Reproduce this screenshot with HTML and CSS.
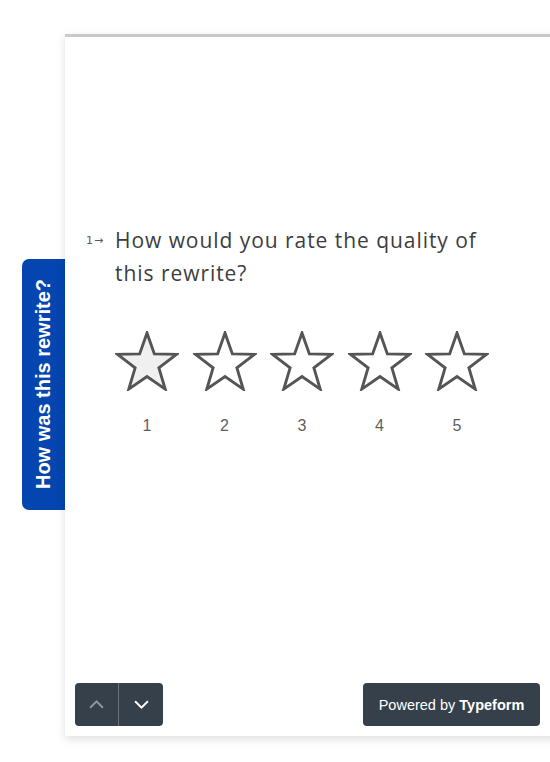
FILE: index.html
```html
<!DOCTYPE html>
<html>
<head>
<meta charset="utf-8">
<link rel="stylesheet" href="styles.css">
</head>
<body>
<div class="page">
  <div class="tab"><span class="tab-text">How was this rewrite?</span></div>
  <div class="panel">
    <div class="content">
      <div class="question">
        <span class="qnum">1<span class="arrow">→</span></span>
        <span class="qtext">How would you rate the quality of this rewrite?</span>
      </div>
      <div class="stars">
        <div class="rate">
          <svg class="star" viewBox="0 0 64 60" width="64" height="60"><polygon class="filled" points="32,2 39.35,22.89 61.48,23.42 43.89,36.86 50.22,58.08 32,45.5 13.78,58.08 20.11,36.86 2.52,23.42 24.65,22.89"/></svg>
          <span class="num">1</span>
        </div>
        <div class="rate">
          <svg class="star" viewBox="0 0 64 60" width="64" height="60"><polygon points="32,2 39.35,22.89 61.48,23.42 43.89,36.86 50.22,58.08 32,45.5 13.78,58.08 20.11,36.86 2.52,23.42 24.65,22.89"/></svg>
          <span class="num">2</span>
        </div>
        <div class="rate">
          <svg class="star" viewBox="0 0 64 60" width="64" height="60"><polygon points="32,2 39.35,22.89 61.48,23.42 43.89,36.86 50.22,58.08 32,45.5 13.78,58.08 20.11,36.86 2.52,23.42 24.65,22.89"/></svg>
          <span class="num">3</span>
        </div>
        <div class="rate">
          <svg class="star" viewBox="0 0 64 60" width="64" height="60"><polygon points="32,2 39.35,22.89 61.48,23.42 43.89,36.86 50.22,58.08 32,45.5 13.78,58.08 20.11,36.86 2.52,23.42 24.65,22.89"/></svg>
          <span class="num">4</span>
        </div>
        <div class="rate">
          <svg class="star" viewBox="0 0 64 60" width="64" height="60"><polygon points="32,2 39.35,22.89 61.48,23.42 43.89,36.86 50.22,58.08 32,45.5 13.78,58.08 20.11,36.86 2.52,23.42 24.65,22.89"/></svg>
          <span class="num">5</span>
        </div>
      </div>
    </div>
    <div class="footer">
      <div class="nav">
        <button class="navbtn up" type="button">
          <svg viewBox="0 0 16 16" width="17" height="17"><path d="M2 11 L8 5 L14 11" fill="none" stroke="currentColor" stroke-width="1.9"/></svg>
        </button>
        <button class="navbtn down" type="button">
          <svg viewBox="0 0 16 16" width="17" height="17"><path d="M2 5 L8 11 L14 5" fill="none" stroke="currentColor" stroke-width="1.9"/></svg>
        </button>
      </div>
      <div class="powered">Powered by <b>Typeform</b></div>
    </div>
  </div>
</div>
</body>
</html>
```

FILE: styles.css
```css
html, body {
  margin: 0;
  padding: 0;
  background: #ffffff;
  overflow: hidden;
}
.page {
  display: flex;
  align-items: flex-start;
  padding: 34px 0 26px 22px;
  width: 528px;
  overflow: hidden;
}
.tab {
  width: 43px;
  height: 251px;
  margin-top: 225px;
  background: #0445af;
  border-radius: 7px 0 0 7px;
  display: flex;
  align-items: center;
  justify-content: center;
  flex-shrink: 0;
}
.tab-text {
  writing-mode: vertical-rl;
  transform: rotate(180deg);
  color: #ffffff;
  font-family: "Liberation Sans", Arial, sans-serif;
  font-weight: bold;
  font-size: 20px;
  white-space: nowrap;
}
.panel {
  width: 495px;
  height: 699px;
  border-top: 3px solid #c9c9c9;
  background: #ffffff;
  box-shadow: 0 3px 9px rgba(0, 0, 0, 0.13);
  display: flex;
  flex-direction: column;
  flex-shrink: 0;
}
.content {
  padding: 187px 0 0 21px;
}
.question {
  display: flex;
  align-items: flex-start;
  font-family: "Open Sans", sans-serif;
  color: #3d3d3d;
}
.qnum {
  font-family: "DejaVu Sans", sans-serif;
  font-size: 11px;
  width: 29px;
  line-height: 33px;
  color: #5a5a5a;
}
.arrow {
  margin-left: 1px;
}
.qtext {
  font-size: 21px;
  line-height: 33px;
  width: 372px;
  letter-spacing: 0.95px;
}
.stars {
  display: flex;
  gap: 13.5px;
  margin: 41px 0 0 29px;
}
.rate {
  width: 64px;
  display: flex;
  flex-direction: column;
  align-items: center;
}
.star {
  display: block;
}
.star polygon {
  fill: #ffffff;
  stroke: #555555;
  stroke-width: 2.9;
  stroke-linejoin: miter;
}
.star polygon.filled {
  fill: #f0f0f0;
}
.num {
  margin-top: 25px;
  font-family: "Liberation Sans", Arial, sans-serif;
  font-size: 16px;
  line-height: 20px;
  color: #5e5e5e;
}
.footer {
  margin-top: auto;
  display: flex;
  justify-content: space-between;
  align-items: center;
  padding: 0 20px 10px 10px;
}
.nav {
  display: flex;
  border-radius: 4px;
  overflow: hidden;
}
.navbtn {
  width: 44px;
  height: 43px;
  border: none;
  padding: 0;
  margin: 0;
  background: #36404b;
  display: flex;
  align-items: center;
  justify-content: center;
}
.navbtn.up {
  color: #8e959c;
  border-right: 1px solid #6b737b;
}
.navbtn.down {
  color: #ffffff;
}
.powered {
  width: 177px;
  height: 43px;
  border-radius: 4px;
  background: #36404b;
  color: #ffffff;
  font-family: "Liberation Sans", Arial, sans-serif;
  font-size: 14.5px;
  display: flex;
  align-items: center;
  justify-content: center;
}
.powered b {
  margin-left: 4px;
}
```
